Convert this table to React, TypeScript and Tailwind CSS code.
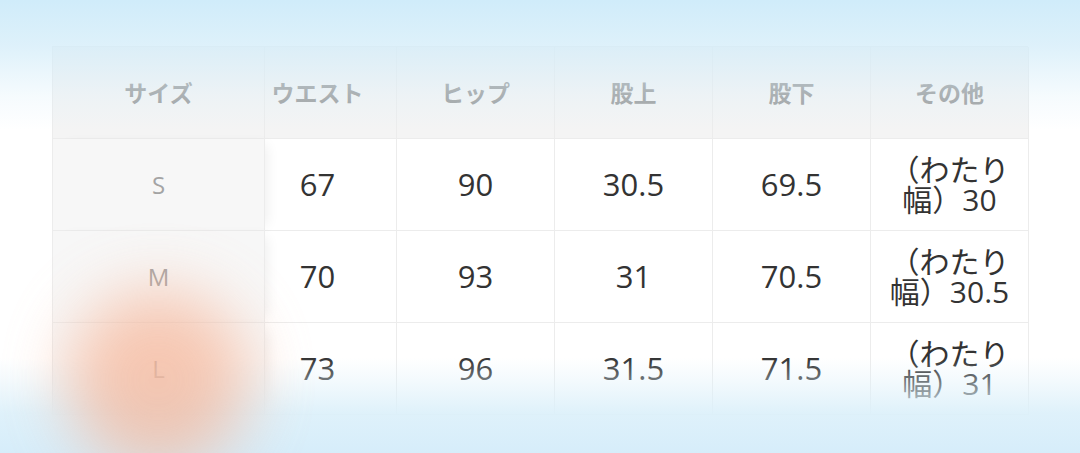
import * as React from "react";

type Row = {
  size: string;
  waist: string;
  hip: string;
  rise: string;
  inseam: string;
  other: string;
};

const headers = ["サイズ", "ウエスト", "ヒップ", "股上", "股下", "その他"];

const rows: Row[] = [
  { size: "S", waist: "67", hip: "90", rise: "30.5", inseam: "69.5", other: "（わたり幅）30" },
  { size: "M", waist: "70", hip: "93", rise: "31", inseam: "70.5", other: "（わたり幅）30.5" },
  { size: "L", waist: "73", hip: "96", rise: "31.5", inseam: "71.5", other: "（わたり幅）31" },
];

const cell = "flex h-[92px] items-center justify-center border-r border-b border-[#ececec] text-center";
const font = "font-['Open_Sans','Noto_Sans_CJK_JP',sans-serif]";

export default function App() {
  return (
    <div className={`relative h-[453px] w-[1080px] overflow-hidden bg-white ${font}`}>
      <div className="pl-[52px] pt-[46px]">
        <div className="grid w-[976px] grid-cols-[212px_132px_158px_158px_158px_158px] border-t border-l border-[#ececec]">
          {headers.map((h, i) => (
            <div
              key={h}
              className={`${cell} bg-[#f4f4f4] font-['Noto_Sans_CJK_JP',sans-serif] text-[23px] font-bold text-[#9c9c9c] ${i === 1 ? "pr-[26px]" : ""}`}
            >
              {h}
            </div>
          ))}

          {rows.map((r) => (
            <React.Fragment key={r.size}>
              <div className={`${cell} relative z-10 bg-[#f7f7f7] text-[24px] text-[#a4a4a4] shadow-[8px_0_12px_-6px_rgba(0,0,0,0.07)]`}>
                {r.size}
              </div>
              <div className={`${cell} bg-white pr-[26px] text-[31px] text-[#333]`}>{r.waist}</div>
              <div className={`${cell} bg-white text-[31px] text-[#333]`}>{r.hip}</div>
              <div className={`${cell} bg-white text-[31px] text-[#333]`}>{r.rise}</div>
              <div className={`${cell} bg-white text-[31px] text-[#333]`}>{r.inseam}</div>
              <div className={`${cell} bg-white px-[10px] text-[30px] leading-[30px] text-[#333]`}>{r.other}</div>
            </React.Fragment>
          ))}
        </div>
      </div>

      {/* frosted blue edges */}
      <div className="pointer-events-none absolute inset-x-0 top-0 z-20 h-[130px] bg-[linear-gradient(to_bottom,rgba(208,236,250,1)_0px,rgba(210,236,249,0.75)_45px,rgba(215,238,249,0.25)_95px,rgba(215,238,249,0)_130px)]" />
      <div className="pointer-events-none absolute inset-x-0 bottom-0 z-20 h-[95px] bg-[linear-gradient(to_top,rgba(214,237,250,1)_0px,rgba(220,240,250,0.92)_40px,rgba(222,241,250,0.4)_70px,rgba(222,241,250,0)_95px)]" />

      {/* orange glow */}
      <div className="pointer-events-none absolute left-[68px] top-[290px] z-30 h-[180px] w-[180px] rounded-full bg-[#f6b395] opacity-70 blur-[32px]" />
    </div>
  );
}
